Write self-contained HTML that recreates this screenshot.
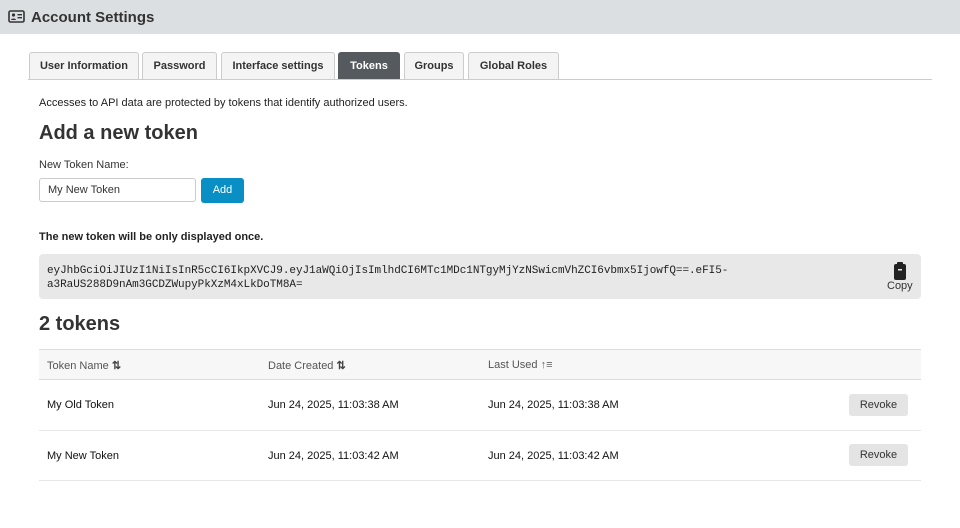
<!DOCTYPE html>
<html><head><meta charset="utf-8"><style>
*{box-sizing:border-box;margin:0;padding:0}
body{width:960px;height:528px;background:#fff;font-family:"Liberation Sans",sans-serif;color:#222;position:relative;overflow:hidden}
.a{position:absolute;white-space:nowrap}
.hdr{left:0;top:0;width:960px;height:34px;background:#dcdfe2}
.tab{top:52px;height:27px;border:1px solid #ccc;border-bottom:none;background:#f4f4f4;border-radius:3px 3px 0 0;font-size:11px;font-weight:bold;text-align:center;line-height:27px;color:#333}
.th{font-size:11px;color:#555;top:359px}
.td{font-size:11px;color:#111}
.rv{left:849px;width:59px;height:22px;background:#e4e4e4;border-radius:3px;font-size:11px;color:#333;text-align:center;line-height:23px}
</style></head><body>
<div class="a hdr"></div>
<svg class="a" style="left:8px;top:10px" width="17" height="13" viewBox="0 0 17 13"><rect x="1" y="1" width="15" height="11" rx="1.5" fill="none" stroke="#333" stroke-width="1.6"/><circle cx="5.5" cy="5" r="1.6" fill="#333"/><path d="M3 10c0-2 5-2 5 0z" fill="#333"/><rect x="9.5" y="4" width="4.5" height="1.4" fill="#333"/><rect x="9.5" y="7" width="4.5" height="1.4" fill="#333"/></svg>
<div class="a" style="left:31px;top:9px;font-size:15px;font-weight:bold;color:#333">Account Settings</div>
<div class="a" style="left:28px;top:79px;width:904px;height:1px;background:#ccc"></div>
<div class="a tab" style="left:29px;width:110px">User Information</div>
<div class="a tab" style="left:142px;width:75px">Password</div>
<div class="a tab" style="left:221px;width:114px">Interface settings</div>
<div class="a tab" style="left:338px;width:62px;background:#555a5e;border-color:#555a5e;color:#fff">Tokens</div>
<div class="a tab" style="left:404px;width:60px">Groups</div>
<div class="a tab" style="left:468px;width:91px">Global Roles</div>
<div class="a" style="left:39px;top:97px;font-size:11px">Accesses to API data are protected by tokens that identify authorized users.</div>
<div class="a" style="left:39px;top:122px;font-size:20px;font-weight:bold;color:#333">Add a new token</div>
<div class="a" style="left:39px;top:159px;font-size:11px;color:#333">New Token Name:</div>
<div class="a" style="left:39px;top:178px;width:157px;height:24px;border:1px solid #ccc;border-radius:3px;font-size:11px;padding-left:8px;line-height:23px;color:#333">My New Token</div>
<div class="a" style="left:201px;top:178px;width:43px;height:25px;background:#0a8fc4;border-radius:3px;color:#fff;font-size:11px;text-align:center;line-height:25px">Add</div>
<div class="a" style="left:39px;top:231px;font-size:11px;font-weight:bold">The new token will be only displayed once.</div>
<div class="a" style="left:39px;top:254px;width:882px;height:45px;background:#e8e8e8;border-radius:4px"></div>
<div class="a" style="left:47px;top:264px;font-family:'Liberation Mono',monospace;font-size:11px;line-height:14px;color:#222;letter-spacing:-0.05px">eyJhbGciOiJIUzI1NiIsInR5cCI6IkpXVCJ9.eyJ1aWQiOjIsImlhdCI6MTc1MDc1NTgyMjYzNSwicmVhZCI6vbmx5IjowfQ==.eFI5-<br>a3RaUS288D9nAm3GCDZWupyPkXzM4xLkDoTM8A=</div>
<svg class="a" style="left:893px;top:262px" width="14" height="18" viewBox="0 0 14 18"><rect x="4" y="0" width="6" height="3" rx="1" fill="#222"/><rect x="1" y="2" width="12" height="16" rx="2" fill="#222"/><rect x="5" y="7" width="4" height="1.5" fill="#e8e8e8"/></svg>
<div class="a" style="left:887px;top:280px;font-size:11px;color:#333">Copy</div>
<div class="a" style="left:39px;top:313px;font-size:20px;font-weight:bold;color:#333">2 tokens</div>
<div class="a" style="left:39px;top:349px;width:882px;height:31px;background:#f7f7f7;border-top:1px solid #ddd;border-bottom:1px solid #ddd"></div>
<div class="a th" style="left:47px">Token Name <b style="color:#444">⇅</b></div>
<div class="a th" style="left:268px">Date Created <b style="color:#444">⇅</b></div>
<div class="a th" style="left:488px">Last Used <span style="color:#666">↑≡</span></div>
<div class="a td" style="left:47px;top:399px">My Old Token</div>
<div class="a td" style="left:268px;top:399px">Jun 24, 2025, 11:03:38 AM</div>
<div class="a td" style="left:488px;top:399px">Jun 24, 2025, 11:03:38 AM</div>
<div class="a rv" style="top:394px">Revoke</div>
<div class="a" style="left:39px;top:430px;width:882px;height:1px;background:#e6e6e6"></div>
<div class="a td" style="left:47px;top:450px">My New Token</div>
<div class="a td" style="left:268px;top:450px">Jun 24, 2025, 11:03:42 AM</div>
<div class="a td" style="left:488px;top:450px">Jun 24, 2025, 11:03:42 AM</div>
<div class="a rv" style="top:444px">Revoke</div>
<div class="a" style="left:39px;top:480px;width:882px;height:1px;background:#e6e6e6"></div>
</body></html>
